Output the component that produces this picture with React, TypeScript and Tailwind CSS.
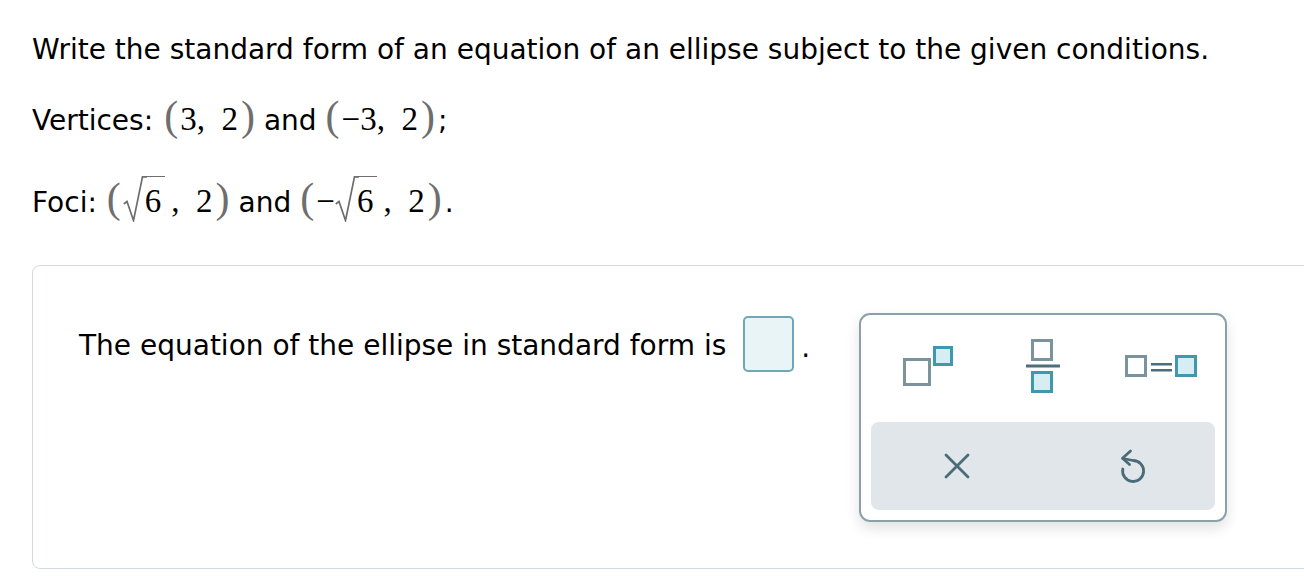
import React from 'react';

const sans = { fontFamily: '"DejaVu Sans", Verdana, sans-serif' };
const serif = { fontFamily: '"Liberation Serif", "Times New Roman", serif' };

function P({ children }: { children: React.ReactNode }) {
  return <span className="text-[#6e6e6e] text-[42px] font-light">{children}</span>;
}

function Sqrt6() {
  return (
    <span className="relative inline-block pl-[22px]">
      <svg width="24" height="46" viewBox="0 0 24 46" className="absolute left-0 top-0">
        <path d="M0.8 28 L4 25.5 L10.5 44.5 L19.5 0.8 L24 0.8" fill="none" stroke="#6e6e6e" strokeWidth="1.7" />
      </svg>
      <span className="inline-block border-t-[1.7px] border-[#6e6e6e] leading-none pt-[8px] pr-[4px]">6</span>
    </span>
  );
}

function Point({ children }: { children: React.ReactNode }) {
  return (
    <span className="inline-flex items-baseline text-[33px] text-black leading-none" style={serif}>
      <P>(</P>
      <span className="ml-[2px] mr-[3px]">{children}</span>
      <P>)</P>
    </span>
  );
}

function SupIcon() {
  return (
    <svg width="52" height="42" viewBox="0 0 52 42">
      <rect x="1.5" y="13.5" width="25" height="25" fill="none" stroke="#7b939c" strokeWidth="3" />
      <rect x="31.5" y="1.5" width="17" height="17" fill="#d5eef4" stroke="#3f97b0" strokeWidth="3" />
    </svg>
  );
}

function FracIcon() {
  return (
    <svg width="36" height="56" viewBox="0 0 36 56">
      <rect x="7.5" y="1.5" width="19" height="19" fill="none" stroke="#7b939c" strokeWidth="3" />
      <rect x="1" y="25.5" width="34" height="3" fill="#4e6d78" />
      <rect x="7.5" y="33.5" width="19" height="19" fill="#d5eef4" stroke="#3f97b0" strokeWidth="3" />
    </svg>
  );
}

function EqIcon() {
  return (
    <svg width="74" height="24" viewBox="0 0 74 24">
      <rect x="1.5" y="1.5" width="19" height="19" fill="none" stroke="#7b939c" strokeWidth="3" />
      <rect x="26" y="8" width="21" height="2.5" fill="#4e6d78" />
      <rect x="26" y="14" width="21" height="2.5" fill="#4e6d78" />
      <rect x="51.5" y="1.5" width="19" height="19" fill="#d5eef4" stroke="#3f97b0" strokeWidth="3" />
    </svg>
  );
}

function XIcon() {
  return (
    <svg width="26" height="26" viewBox="0 0 26 26">
      <path d="M2 2 L24 24 M24 2 L2 24" stroke="#4a6b77" strokeWidth="2.8" strokeLinecap="round" />
    </svg>
  );
}

function UndoIcon() {
  return (
    <svg width="28" height="36" viewBox="0 0 28 36">
      <path d="M4.8 21 A10.5 10.5 0 1 0 15 12.5 L5 10.5" fill="none" stroke="#4a6b77" strokeWidth="2.8" strokeLinecap="round" strokeLinejoin="round" />
      <path d="M12.5 3 L4.5 10.2 L11.5 16.5" fill="none" stroke="#4a6b77" strokeWidth="2.8" strokeLinecap="round" strokeLinejoin="round" />
    </svg>
  );
}

export default function App() {
  return (
    <div className="w-[1304px] h-[580px] bg-white overflow-hidden pl-8 pt-[33px] text-black" style={sans}>
      <p className="text-[28px] leading-[34px]">
        Write the standard form of an equation of an ellipse subject to the given conditions.
      </p>

      <div className="mt-[28px] h-[40px] flex items-baseline text-[28px] leading-[40px]">
        <span className="mr-[11px]">Vertices:</span>
        <Point>3,&nbsp;&nbsp;2</Point>
        <span className="mx-[9px]">and</span>
        <Point>−3,&nbsp;&nbsp;2</Point>
        <span className="ml-[3px]">;</span>
      </div>

      <div className="mt-[41px] h-[46px] flex items-baseline text-[28px] leading-[46px]">
        <span className="mr-[10px]">Foci:</span>
        <Point><Sqrt6 /><span className="ml-[6px]">,</span>&nbsp;&nbsp;2</Point>
        <span className="mx-[9px]">and</span>
        <Point>−<Sqrt6 /><span className="ml-[6px]">,</span>&nbsp;&nbsp;2</Point>
        <span className="ml-[3px]">.</span>
      </div>

      <div className="mt-[43px] w-[1300px] h-[304px] border border-[#d3dade] rounded-[8px] pl-[46px] pt-[47px]">
        <div className="flex items-start">
          <div className="flex items-center mt-[3px]">
            <span className="text-[28px] leading-[34px] relative top-[2px]">The equation of the ellipse in standard form is</span>
            <div className="ml-[17px] w-[51px] h-[56px] rounded-[5px] border-2 border-[#6ea8b5] bg-[#e8f4f6]" />
            <span className="ml-[7px] text-[28px] relative top-[4px]">.</span>
          </div>
          <div className="ml-[49px] w-[368px] h-[209px] border-2 border-[#8aa1a9] rounded-[11px] shadow-[0_6px_14px_rgba(0,0,0,0.12)] p-[10px] flex flex-col">
            <div className="h-[97px] grid grid-cols-3 items-center pb-[14px]">
              <div className="flex justify-center"><SupIcon /></div>
              <div className="flex justify-center"><FracIcon /></div>
              <div className="flex justify-center pl-[8px]"><EqIcon /></div>
            </div>
            <div className="flex-1 bg-[#e0e6e9] rounded-[8px] grid grid-cols-2 items-center">
              <div className="flex justify-center"><XIcon /></div>
              <div className="flex justify-center pl-[6px]"><UndoIcon /></div>
            </div>
          </div>
        </div>
      </div>
    </div>
  );
}
